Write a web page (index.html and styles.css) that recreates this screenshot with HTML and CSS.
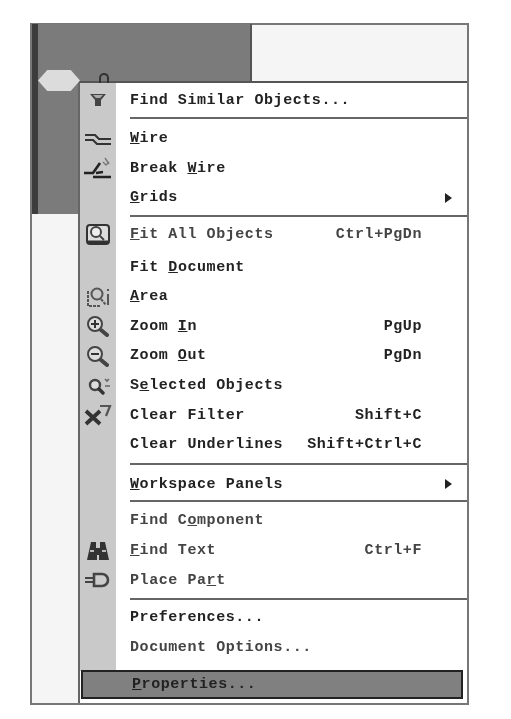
FILE: index.html
```html
<!DOCTYPE html>
<html lang="en">
<head>
  <meta charset="UTF-8">
  <meta name="viewport" content="width=device-width, initial-scale=1.0">
  <title>Context Menu</title>
  <link rel="stylesheet" href="styles.css">
</head>
<body>
  <div class="frame">
    <div class="side">
      <div class="side-dark"></div>
    </div>
    <div class="main">
      <div class="top">
        <div class="top-dark"></div>
        <div class="top-light"></div>
      </div>
      <div class="menu">

        <div class="row row-top">
          <span class="icon"><svg width="28" height="24" viewBox="0 0 28 24"><path d="M6 6h16l-5 6v6h-6v-6z" fill="#444"/><path d="M9 7h10l-3 3h-4z" fill="#aaa"/></svg></span>
          <span class="label">Find Similar Objects...</span>
        </div>
        <div class="sep"></div>

        <div class="group group-wire">
          <div class="row">
            <span class="icon"><svg width="28" height="24" viewBox="0 0 28 24"><path d="M1 8h10l4 4h12M1 13h8l4 4h14" fill="none" stroke="#333" stroke-width="2.2"/></svg></span>
            <span class="label"><u>W</u>ire</span>
          </div>
          <div class="row">
            <span class="icon"><svg width="28" height="24" viewBox="0 0 28 24"><path d="M0 17h9l7-10" fill="none" stroke="#222" stroke-width="2.6"/><path d="M9 21h18M12 17l7-1" fill="none" stroke="#222" stroke-width="2.4"/><path d="M19 6l3 3 3-3M21 2l4 6" fill="none" stroke="#777" stroke-width="1.4"/></svg></span>
            <span class="label">Break <u>W</u>ire</span>
          </div>
          <div class="row">
            <span class="icon"></span>
            <span class="label"><u>G</u>rids</span>
            <span class="arrow"></span>
          </div>
        </div>
        <div class="sep"></div>

        <div class="group group-view">
          <div class="row row-first">
            <span class="icon"><svg width="28" height="24" viewBox="0 0 28 24"><rect x="3" y="2" width="22" height="19" rx="3" fill="#ddd" stroke="#333" stroke-width="2"/><circle cx="12" cy="9" r="5" fill="#eee" stroke="#444" stroke-width="2"/><path d="M16 13l4 4" stroke="#444" stroke-width="2"/><path d="M3 19h22" stroke="#333" stroke-width="3"/></svg></span>
            <span class="label smeared"><u>F</u>it All Objects</span>
            <span class="keys smeared">Ctrl+PgDn</span>
          </div>
          <div class="row">
            <span class="icon"></span>
            <span class="label">Fit <u>D</u>ocument</span>
          </div>
          <div class="row">
            <span class="icon"><svg width="28" height="24" viewBox="0 0 28 24"><circle cx="13" cy="9" r="5.5" fill="none" stroke="#555" stroke-width="2"/><path d="M17 14l5 6M4 6v15h13" fill="none" stroke="#555" stroke-width="2" stroke-dasharray="3 1"/><path d="M24 4v2M24 9v11" stroke="#555" stroke-width="2"/></svg></span>
            <span class="label"><u>A</u>rea</span>
          </div>
          <div class="row">
            <span class="icon"><svg width="28" height="24" viewBox="0 0 28 24"><circle cx="11" cy="10" r="7" fill="#ddd" stroke="#444" stroke-width="2"/><path d="M7 10h8M11 6v8" stroke="#333" stroke-width="2"/><path d="M17 16l6 5" stroke="#444" stroke-width="4" stroke-linecap="round"/></svg></span>
            <span class="label">Zoom <u>I</u>n</span>
            <span class="keys">PgUp</span>
          </div>
          <div class="row">
            <span class="icon"><svg width="28" height="24" viewBox="0 0 28 24"><circle cx="11" cy="10" r="7" fill="#ddd" stroke="#444" stroke-width="2"/><path d="M7 10h8" stroke="#333" stroke-width="2"/><path d="M17 16l6 5" stroke="#444" stroke-width="4" stroke-linecap="round"/></svg></span>
            <span class="label">Zoom <u>O</u>ut</span>
            <span class="keys">PgDn</span>
          </div>
          <div class="row">
            <span class="icon"><svg width="28" height="24" viewBox="0 0 28 24"><circle cx="11" cy="11" r="5" fill="#ddd" stroke="#444" stroke-width="2.4"/><path d="M15 15l4 4" stroke="#333" stroke-width="3.4" stroke-linecap="round"/><path d="M21 5l2 2 2-2M21 12h5" fill="none" stroke="#666" stroke-width="1.6"/></svg></span>
            <span class="label">S<u>e</u>lected Objects</span>
          </div>
          <div class="row">
            <span class="icon"><svg width="28" height="24" viewBox="0 0 28 24"><path d="M2 8l14 13M16 8L2 21" stroke="#333" stroke-width="3.8"/><path d="M16 3h10l-4 10" fill="none" stroke="#555" stroke-width="2.2"/></svg></span>
            <span class="label">Clear Filter</span>
            <span class="keys">Shift+C</span>
          </div>
          <div class="row">
            <span class="icon"></span>
            <span class="label">Clear Underlines</span>
            <span class="keys">Shift+Ctrl+C</span>
          </div>
        </div>
        <div class="sep"></div>

        <div class="group group-panels">
          <div class="row">
            <span class="icon"></span>
            <span class="label"><u>W</u>orkspace Panels</span>
            <span class="arrow"></span>
          </div>
        </div>
        <div class="sep"></div>

        <div class="group group-find">
          <div class="row">
            <span class="icon"></span>
            <span class="label smeared">Find C<u>o</u>mponent</span>
          </div>
          <div class="row">
            <span class="icon"><svg width="28" height="24" viewBox="0 0 28 24"><path d="M7 3h5v6h4V3h5l4 18H15v-5h-2v5H3z" fill="#333"/><path d="M6 12h4M18 12h4" stroke="#bbb" stroke-width="2"/></svg></span>
            <span class="label smeared"><u>F</u>ind Text</span>
            <span class="keys smeared">Ctrl+F</span>
          </div>
          <div class="row">
            <span class="icon"><svg width="28" height="24" viewBox="0 0 28 24"><path d="M1 10h9M1 14h9" stroke="#444" stroke-width="1.8"/><path d="M10 6h8a6 6 0 0 1 0 12h-8z" fill="#ccc" stroke="#444" stroke-width="2.6"/></svg></span>
            <span class="label smeared">Place Pa<u>r</u>t</span>
          </div>
        </div>
        <div class="sep"></div>

        <div class="group group-prefs">
          <div class="row">
            <span class="icon"></span>
            <span class="label">Preferences...</span>
          </div>
          <div class="row">
            <span class="icon"></span>
            <span class="label smeared">Document Options...</span>
          </div>
        </div>

        <div class="row row-active">
          <span class="icon"></span>
          <span class="label"><u>P</u>roperties...</span>
        </div>
      </div>
    </div>

    <div class="hex"></div>
    <div class="pin"></div>
  </div>
</body>
</html>
```

FILE: styles.css
```css
body {
  margin: 0;
  background-color: #fff;
  font-family: "Liberation Mono", "DejaVu Sans Mono", monospace;
}
.frame {
  position: relative;
  display: flex;
  width: 435px;
  height: 679px;
  margin: 23px 0 0 30px;
  border: 1px solid #777;
  border-width: 1px 2px 2px 2px;
  background-color: #f5f5f5;
}
.side {
  width: 46px;
  flex: none;
}
.side-dark {
  height: 190px;
  background-color: #7b7b7b;
  border-left: 6px solid #3c3c3c;
}
.main {
  flex: 1;
  display: flex;
  flex-direction: column;
}
.top {
  display: flex;
  height: 57px;
  flex: none;
}
.top-dark {
  width: 172px;
  background-color: #7b7b7b;
  border-right: 2px solid #555;
}
.top-light {
  flex: 1;
  background-color: #f5f5f5;
  border-top: 1px solid #777;
}
.menu {
  flex: 1;
  border-top: 2px solid #555;
  border-left: 2px solid #666;
  background: #fff linear-gradient(to right, #c9c9c9 36px, #fff 36px) no-repeat;
  background-size: 100% 588px;
}
.row {
  display: flex;
  align-items: center;
  height: 29.6px;
  font-size: 15px;
  font-weight: bold;
  letter-spacing: 0.57px;
  color: #222;
}
.row-top {
  height: 34px;
}
.row-first {
  margin-bottom: 3px;
}
.icon {
  width: 36px;
  height: 24px;
  flex: none;
  display: flex;
  justify-content: center;
  margin-right: 14px;
  filter: blur(0.5px);
}
.label {
  flex: 1;
  filter: blur(0.5px);
  white-space: nowrap;
}
.keys {
  margin-right: 45px;
  filter: blur(0.5px);
}
.smeared {
  filter: blur(0.65px);
  color: #444;
}
.arrow {
  width: 0;
  height: 0;
  margin-right: 15px;
  border-left: 7px solid #222;
  border-top: 5px solid transparent;
  border-bottom: 5px solid transparent;
}
.sep {
  height: 2px;
  margin-left: 50px;
  background-color: #666;
}
.group-wire {
  padding: 5px 0 2px;
}
.group-view {
  padding: 3px 0 3px;
}
.group-panels {
  padding: 5px 0 1px;
}
.group-find {
  padding: 4px 0 3px;
}
.group-prefs {
  padding: 3px 0 8px;
}
.row-active {
  height: 25px;
  margin: 0 4px 0 1px;
  border: 2px solid #222;
  background-color: #808080;
}
.row-active .icon {
  width: 35px;
  height: 20px;
}
.hex {
  position: absolute;
  left: 6px;
  top: 46px;
  width: 42px;
  height: 21px;
  background-color: #dcdcdc;
  clip-path: polygon(22% 0, 78% 0, 100% 50%, 78% 100%, 22% 100%, 0 50%);
}
.pin {
  position: absolute;
  left: 67px;
  top: 49px;
  width: 6px;
  height: 8px;
  border: 2px solid #333;
  border-bottom: none;
  border-radius: 5px 5px 0 0;
}
```
